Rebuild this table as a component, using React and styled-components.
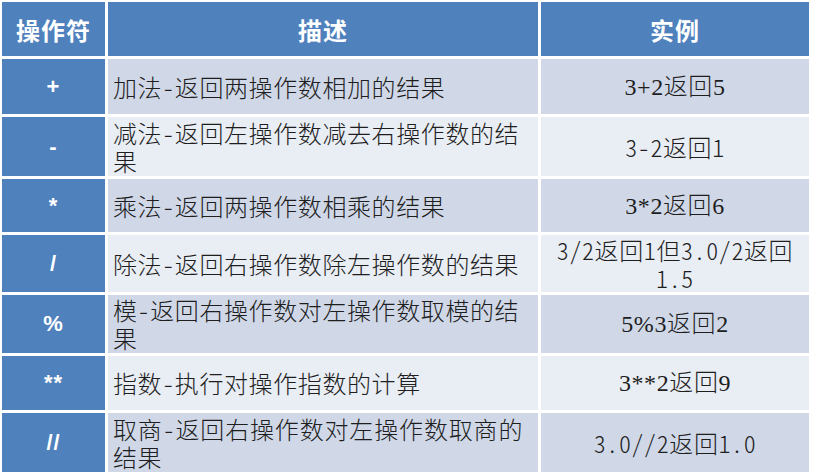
import React from 'react';
import styled, { createGlobalStyle } from 'styled-components';

const GlobalStyle = createGlobalStyle`
  html, body {
    margin: 0;
    padding: 0;
    background: #ffffff;
  }
`;

const rows = [
  { op: '+', desc: '加法-返回两操作数相加的结果', example: '3+2返回5' },
  { op: '-', desc: '减法-返回左操作数减去右操作数的结果', example: '3-2返回1', mono: true },
  { op: '*', desc: '乘法-返回两操作数相乘的结果', example: '3*2返回6' },
  { op: '/', desc: '除法-返回右操作数除左操作数的结果', example: '3/2返回1但3.0/2返回1.5', mono: true },
  { op: '%', desc: '模-返回右操作数对左操作数取模的结果', example: '5%3返回2' },
  { op: '**', desc: '指数-执行对操作指数的计算', example: '3**2返回9' },
  { op: '//', desc: ['取商-返回右操作数对左操作数取商的', '结果'], example: '3.0//2返回1.0', mono: true },
];

export default function App() {
  return (
    <Page>
      <GlobalStyle />
      <Table>
        <HeadCell>操作符</HeadCell>
        <HeadCell>描述</HeadCell>
        <HeadCell>实例</HeadCell>
        {rows.map((row, idx) => {
          const band = idx % 2 === 0 ? 'dark' : 'light';
          return (
            <React.Fragment key={idx}>
              <OpCell>{row.op}</OpCell>
              <DescCell band={band}>
                {Array.isArray(row.desc) ? (
                  <DescText>
                    <JustifiedLine>{row.desc[0]}</JustifiedLine>
                    <div>{row.desc[1]}</div>
                  </DescText>
                ) : (
                  <DescText>{row.desc}</DescText>
                )}
              </DescCell>
              <ExampleCell band={band} mono={row.mono}>
                <div>{row.example}</div>
              </ExampleCell>
            </React.Fragment>
          );
        })}
      </Table>
    </Page>
  );
}

const Page = styled.div`
  padding: 2px;
  width: 813px;
  height: 476px;
  box-sizing: border-box;
`;

// 표 전체 : 흰 간격이 셀 사이 선 역할
const Table = styled.div`
  display: grid;
  grid-template-columns: 103px 430px 268px;
  grid-template-rows: 54px 55px 59px 53px 57px 58px 54px 59px;
  gap: 3px;
  background: #ffffff;
`;

const HeadCell = styled.div`
  display: flex;
  align-items: center;
  justify-content: center;
  background: #4f81bd;
  color: #ffffff;
  font-family: 'Noto Sans CJK SC', sans-serif;
  font-weight: 700;
  font-size: 24px;
  letter-spacing: 1px;
`;

const OpCell = styled.div`
  display: flex;
  align-items: center;
  justify-content: center;
  background: #4f81bd;
  color: #ffffff;
  font-family: 'Liberation Sans', Arial, sans-serif;
  font-weight: 700;
  font-size: 22px;
  letter-spacing: 1px;
`;

const DescCell = styled.div`
  display: flex;
  align-items: center;
  padding: 0 6px 0 5px;
  background: ${(props) => (props.band === 'dark' ? '#d0d8e8' : '#e9edf4')};
  color: #1e1e1e;
  font-family: 'Noto Sans CJK SC', sans-serif;
  font-feature-settings: 'hwid' 1;
  font-weight: 300;
  font-size: 24px;
  letter-spacing: 0.6px;
  line-height: 28px;
`;

const DescText = styled.div`
  width: 100%;
`;

// 마지막 행 첫 줄은 양쪽 정렬로 칸을 채움
const JustifiedLine = styled.div`
  text-align: justify;
  text-align-last: justify;
  width: 410px;
`;

const ExampleCell = styled.div`
  display: flex;
  align-items: center;
  justify-content: center;
  text-align: center;
  padding: 0 4px;
  background: ${(props) => (props.band === 'dark' ? '#d0d8e8' : '#e9edf4')};
  color: #1e1e1e;
  font-family: ${(props) =>
    props.mono ? "'Noto Sans CJK SC', sans-serif" : "'Liberation Serif', 'Noto Sans CJK SC', serif"};
  font-feature-settings: ${(props) => (props.mono ? "'hwid' 1" : 'normal')};
  font-weight: 300;
  font-size: 24px;
  letter-spacing: 0.6px;
  line-height: 28px;
`;
